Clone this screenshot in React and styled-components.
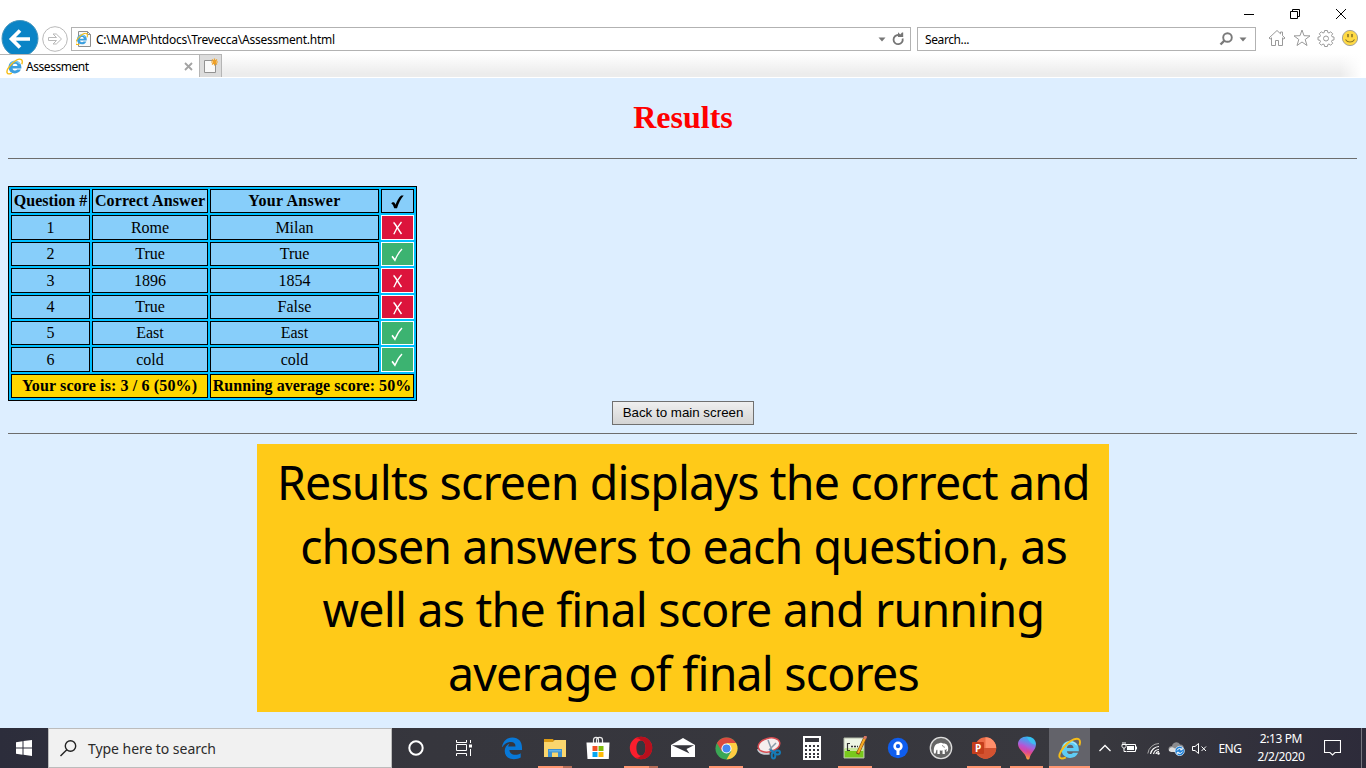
import React from "react";
import styled, { createGlobalStyle } from "styled-components";

const Global = createGlobalStyle`
  * { box-sizing: border-box; }
  html, body { margin: 0; padding: 0; }
  body { width: 1366px; height: 768px; overflow: hidden; background: #ddeeff; }
  svg { display: block; flex: none; }
`;

const ui = `"Noto Sans", "Open Sans", sans-serif`;
const serif = `"Liberation Serif", "Times New Roman", serif`;

const Screen = styled.div`
  width: 1366px;
  height: 768px;
  display: flex;
  flex-direction: column;
  overflow: hidden;
`;

/* ---------- browser window frame ---------- */

const Chrome = styled.header`
  height: 78px;
  flex: none;
  background: #fff;
  font: 12px/16px ${ui};
  color: #000;
`;

const TitleBar = styled.div`
  height: 27px;
  display: flex;
  justify-content: flex-end;
  gap: 36px;
  padding: 9px 20px 0 0;
`;

const NavRow = styled.div`
  height: 27px;
  display: flex;
  align-items: flex-start;
`;

const BackButton = styled.div`
  width: 41px;
  height: 34px;
  margin-top: -7px;
`;

const ForwardButton = styled.div`
  width: 30px;
  margin-top: -1px;
`;

const Field = styled.div`
  width: ${(p) => p.$width}px;
  height: 24px;
  margin-right: ${(p) => p.$after}px;
  border: 1px solid #b2b2b2;
  display: flex;
  align-items: center;
  padding: 0 ${(p) => p.$right}px 0 ${(p) => p.$left}px;
`;

const Label = styled.span`
  flex: ${(p) => (p.$grow ? 1 : "none")};
  margin-left: ${(p) => p.$indent || 0}px;
  padding-top: ${(p) => p.$drop || 0}px;
  letter-spacing: ${(p) => p.$spacing || 0}px;
  white-space: nowrap;
`;

const Tools = styled.div`
  display: flex;
  padding-top: 1px;
`;

const TabRow = styled.div`
  height: 23px;
  display: flex;
  background: linear-gradient(90deg, transparent 1340px, #fff 1362px),
    linear-gradient(#fff, #ececec 85%);
`;

const Tab = styled.div`
  width: 199px;
  height: 23px;
  display: flex;
  align-items: center;
  padding: 1px 6px 0 6px;
  background: #fff;
  border-top: 1px solid #b5b5b5;
`;

const NewTab = styled.div`
  width: 23px;
  height: 23px;
  background: #dcdcdc;
  border: 1px solid #b5b5b5;
  border-bottom: 0;
  padding: 3px 0 0 4px;
`;

/* ---------- page ---------- */

const Page = styled.main`
  height: 650px;
  flex: none;
  padding: 21px 8px 0;
  font-family: ${serif};
  color: #000;
`;

const Title = styled.h1`
  margin: 0;
  height: 36px;
  font-size: 32px;
  line-height: 36px;
  text-align: center;
  color: #f00;
`;

const Rule = styled.div`
  height: 1px;
  width: 1349px;
  background: #6d6d6d;
  margin-top: ${(p) => p.$top}px;
`;

const Table = styled.table`
  width: 409px;
  height: 215px;
  margin-top: 27px;
  table-layout: fixed;
  border-collapse: separate;
  border-spacing: 2px;
  border: 1px solid #000;
  background: #00bfff;
`;

const Col = styled.col`
  width: ${(p) => p.$w}px;
`;

const Row = styled.tr`
  height: ${(p) => p.$h}px;
`;

const Cell = styled.td`
  padding: ${(p) => (p.$low ? 1 : 0)}px ${(p) => (p.$low ? 1 : 0)}px 0 0;
  height: ${(p) => p.$h}px;
  border: 1px solid ${(p) => p.$edge || "#000"};
  background: ${(p) => p.$fill || "#87cefa"};
  text-align: center;
  vertical-align: middle;
  font-size: 16px;
  line-height: 20px;
  font-weight: ${(p) => (p.$bold ? 700 : 400)};
  letter-spacing: ${(p) => p.$spacing || 0}px;
  white-space: nowrap;
  overflow: hidden;

  svg { margin: 0 auto; }
`;

const ButtonRow = styled.div`
  display: flex;
  justify-content: center;
`;

const Button = styled.button`
  width: 142px;
  height: 24px;
  padding: 0;
  border: 1px solid #707070;
  border-radius: 0;
  background: linear-gradient(#efefef, #d4d4d4);
  font: 13.33px/20px "Liberation Sans", Arial, sans-serif;
  color: #000;
  white-space: nowrap;
`;

const Callout = styled.section`
  width: 852px;
  height: 268px;
  margin: 10px 0 0 249px;
  padding-top: 7px;
  background: #ffca18;
  display: flex;
  flex-direction: column;
  align-items: center;
`;

const CalloutLine = styled.div`
  height: 63.7px;
  font: 46.5px/63.7px ${ui};
  letter-spacing: ${(p) => p.$spacing}px;
  margin-right: ${(p) => p.$spacing}px;
  white-space: nowrap;
`;

/* ---------- taskbar ---------- */

const Taskbar = styled.footer`
  height: 40px;
  flex: none;
  display: flex;
  background: linear-gradient(90deg, #2c2d3b 0, #36363d 420px, #38383e 1100px, #2d2b3a 1366px);
  color: #fff;
  font-family: ${ui};
`;

const Slot = styled.div`
  width: ${(p) => p.$w}px;
  height: 40px;
  display: flex;
  align-items: center;
  justify-content: center;
`;

const SearchBox = styled.div`
  width: 344px;
  height: 40px;
  display: flex;
  align-items: center;
  gap: 11px;
  padding-left: 11px;
  background: #f1f1f1;
  border: 1px solid #bcbcbc;
  color: #2b2b2b;
  font-size: 14px;
  letter-spacing: -0.05px;
`;

const Apps = styled.div`
  width: 600.6px;
  margin-left: 2.6px;
  display: flex;
`;

const TaskButton = styled.div`
  flex: 1;
  height: 40px;
  display: flex;
  flex-direction: column;
  align-items: center;
  background: ${(p) => (p.$active ? "linear-gradient(90deg, transparent 1px, #63636a 1px, #63636a 42px, transparent 42px)" : "none")};
`;

const AppIcon = styled.div`
  height: 38px;
  padding-top: 2px;
  display: flex;
  align-items: center;
`;

const Mark = styled.div`
  width: ${(p) => p.$w}px;
  height: 2px;
  background: #ff9671;
  border-right: ${(p) => (p.$multi ? "9px solid #b56c57" : "0")};
`;

const Tray = styled.div`
  flex: 1;
  display: flex;
  align-items: center;
  padding-left: 7px;
`;

const TrayItem = styled.div`
  width: ${(p) => p.$w}px;
  display: flex;
  justify-content: center;
`;

const Lang = styled.div`
  width: 30px;
  margin-left: 7px;
  font-size: 12px;
  letter-spacing: -0.45px;
  text-align: center;
`;

const Clock = styled.div`
  width: 60px;
  margin-left: 6px;
  font-size: 12px;
  line-height: 18px;
  letter-spacing: -0.4px;
  text-align: center;
  white-space: nowrap;
`;

const ShowDesktop = styled.div`
  width: 5px;
  height: 40px;
  margin-left: 6px;
  border-left: 1px solid #77767f;
`;

/* ---------- icons ---------- */

const IE = ({ size = 16, dark }) => (
  <svg width={size} height={size} viewBox="0 0 24 24" fill="none">
    <path d="M21 16.400c-1.600 3.600-4.500 5.400-8.300 5.400-5.400 0-9-3.500-9-8.800s3.700-9.100 9-9.100c5.500 0 9 3.800 9 9.200v1.700H9.300c.2 1.900 1.500 3 3.500 3 1.300 0 2.300-.5 2.900-1.400z" fill={dark ? "#5fcdf5" : "#3b9fdf"} />
    <path d="M9.300 11.400h6.900c-.2-2-1.400-3.200-3.400-3.200s-3.200 1.200-3.500 3.200z" fill={dark ? "#63636a" : "#fff"} />
    <path d="M6 9.500C7.500 6.400 9.800 5 12.800 5c2.900 0 5.200 1.300 6.600 3.600" stroke="#a5e6fb" strokeWidth="1.300" />
    <path d="M22.300 8.700c1-3 1-5.300-.6-6.400C19.400.7 14 2.800 9.200 7.300 4 12.200.6 18.200 1.600 20.900c.7 2.100 3.500 1.900 6.600.3" stroke="#f6bd18" strokeWidth="2" />
  </svg>
);

const Home = () => (
  <svg width="18" height="20" viewBox="0 0 18 20" fill="none" stroke="#999" strokeWidth="1">
    <path d="M1 10 9 2.500l3.500 3.300V4h2v3.700L17 10l-1.200 1-1.300-1.200v7.700h-4v-5h-3v5h-4V9.800L2.200 11z" />
  </svg>
);
const Star = () => (
  <svg width="18" height="20" viewBox="0 0 18 20" fill="none" stroke="#999" strokeWidth="1">
    <path d="m9 2 2 5.700 6 .2-4.800 3.600L14 17.500 9 14l-5 3.500 1.800-6L1 7.900l6-.2z" />
  </svg>
);
const Gear = () => (
  <svg width="18" height="20" viewBox="0 0 18 20" fill="none" stroke="#999" strokeWidth="1">
    <path d="M7.600 2.500h2.800l.4 2 1.200.5 1.700-1.200 2 2L14.500 7.500l.5 1.200 2 .4v2.800l-2 .4-.5 1.200 1.200 1.700-2 2L12 16l-1.200.5-.4 2H7.600l-.4-2L6 16l-1.700 1.200-2-2 1.200-1.700-.5-1.200-2-.4V9.100l2-.4.5-1.200-1.200-1.700 2-2L6 5l1.200-.5z" />
    <circle cx="9" cy="10.500" r="2.500" />
  </svg>
);
const Smile = () => (
  <svg width="18" height="20" viewBox="0 0 18 20" fill="none">
    <circle cx="9" cy="10" r="7.600" fill="#ffda45" stroke="#a6a397" />
    <path d="M7 6v3.300M11 6v3.300" stroke="#8a7526" strokeWidth="1.600" />
    <path d="M4.500 11.500c1.800 3.300 7.200 3.300 9 0" stroke="#8a7526" strokeWidth="1.100" />
  </svg>
);
const Down = () => (
  <svg width="8" height="5" viewBox="0 0 8 5"><path d="M.5.5h7L4 4.500z" fill="#777" /></svg>
);

const Check = ({ bold }) =>
  bold ? (
    <svg width="13" height="14" viewBox="0 0 13 14">
      <path d="M.3 8.500c.8-1.500 3-1.700 3.700 0l.5 1.300C6.100 5.600 8 2.400 10.200.6h2.500C9.600 4.300 7.700 8.300 6 13.200H3.200C2.500 11 1.800 9.300.3 8.500z" fill="#000" />
    </svg>
  ) : (
    <svg width="12" height="14" viewBox="0 0 12 14" fill="none" stroke="#fff">
      <path d="M1 8.500 3.900 12.500C5.700 8 7.800 4.200 11 1" strokeWidth="1.300" />
      <path d="m1.200 8.200 2.600 3.300" strokeWidth="1.200" />
    </svg>
  );
const Cross = () => (
  <svg width="11" height="14" viewBox="0 0 11 14" fill="none" stroke="#fff">
    <path d="M1.500 1.500C3 2 6.500 9 9.500 13" strokeWidth="1.500" />
    <path d="M9.500 1C7 4 3.500 9 1.800 13.300" strokeWidth="1.300" />
  </svg>
);

const Edge = () => (
  <svg width="22" height="24" viewBox="0 0 22 24">
    <path d="M1 10.700C2.200 4.300 6 1.200 11.500 1.200c6 0 9.500 4.300 9.500 10v2.500H8.400c.2 3 2.500 4.800 5.900 4.800 2 0 3.800-.5 5.400-1.500v4.300c-1.900 1.100-4.300 1.600-6.800 1.600-5.600 0-9.200-3.300-9.200-8.200 0-3.300 1.800-6 4.900-7.500-.8.900-1.300 1.900-1.400 3h7.300c0-3-1.500-4.500-4.500-4.500-3.500 0-6.600 1.900-8.600 5z" fill="#0878d7" transform="translate(0 .3)" />
  </svg>
);
const Folder = () => (
  <svg width="22" height="20" viewBox="0 0 22 20">
    <path d="M0 1h9l1.200 2H22v16H0z" fill="#dc9b13" />
    <path d="M0 4h9l1.500-2H22v17H0z" fill="#fad66d" />
    <path d="M4 19v-8h14v8h-4v-4.500H8V19z" fill="#3d91d2" />
    <path d="M5 12h12v1.500H5z" fill="#63b4ea" />
  </svg>
);
const Store = () => (
  <svg width="24" height="24" viewBox="0 0 24 24">
    <path d="M7.500 7V4c0-3.500 5-3.500 5 0v3M10.500 7V4c0-3.500 6-3.500 6 0v3" fill="none" stroke="#e8e8e8" strokeWidth="1.200" />
    <path d="M.5 6.500h23L22.800 23H1.500z" fill="#fff" />
    <path d="M6.500 10h5v5h-5z" fill="#f05125" /><path d="M12.500 10h5v5h-5z" fill="#7ebb0a" />
    <path d="M6.500 16h5v5h-5z" fill="#05a6f0" /><path d="M12.500 16h5v5h-5z" fill="#ffba08" />
  </svg>
);
const Opera = () => (
  <svg width="24" height="24" viewBox="0 0 24 24">
    <path fillRule="evenodd" d="M12 .8a11.200 11.200 0 1 0 0 22.400A11.200 11.200 0 0 0 12 .8zm0 3.600c3 0 4.600 3.200 4.600 7.600s-1.600 7.600-4.600 7.600S7.400 16.400 7.400 12 9 4.400 12 4.400z" fill="#fa1e2d" />
    <path d="M12 .8a11.200 11.200 0 0 1 0 22.400c-2 0-4-.8-5-2 1.500.8 3 .7 5-1.600 3 0 4.600-3.200 4.600-7.600S15 4.400 12 4.400c-1.700-2-3.500-2.200-5-1.600 1.300-1.200 3-2 5-2z" fill="#b8101d" />
  </svg>
);
const Mail = () => (
  <svg width="24" height="20" viewBox="0 0 24 20">
    <path d="M0 7 12 0l12 7v12H0z" fill="#fff" />
    <path d="M1 7.200h22L15.500 11l3 4.500z" fill="#36363d" />
  </svg>
);
const ChromeLogo = () => (
  <svg width="23" height="23" viewBox="0 0 24 24">
    <circle cx="12" cy="12" r="11.500" fill="#3ba755" />
    <path d="M2 6.300A11.500 11.500 0 0 1 22 6.300H12l-5 8.600z" fill="#db4a3f" />
    <path d="M22 6.300A11.500 11.500 0 0 1 12 23.500l5-8.600-5-8.600z" fill="#ffcd42" />
    <circle cx="12" cy="12" r="5.300" fill="#fff" /><circle cx="12" cy="12" r="4.200" fill="#4688f1" />
  </svg>
);
const Snip = () => (
  <svg width="24" height="24" viewBox="0 0 24 24" fill="none">
    <path d="M1.500 13c1 4 6 5 11 4" stroke="#c9cdd3" strokeWidth="3" />
    <ellipse cx="12" cy="9" rx="11" ry="6.800" fill="#f5eeee" stroke="#d74c51" strokeWidth="1.500" transform="rotate(-14 12 9)" />
    <path d="m11 4 4.500 12M19 7l-7 7" stroke="#8a9ba9" strokeWidth="1.500" />
    <ellipse cx="16.500" cy="19.500" rx="1.800" ry="3" stroke="#167bb6" strokeWidth="2" />
    <ellipse cx="20.500" cy="16.500" rx="2.500" ry="2" stroke="#167bb6" strokeWidth="2" />
    <path d="m13 14 4 2" stroke="#167bb6" strokeWidth="2" />
  </svg>
);
const Calc = () => (
  <svg width="18" height="24" viewBox="0 0 18 24">
    <path d="M0 0h18v24H0z" fill="#fff" />
    <path d="M2 2h14v4H2z" fill="#37373e" />
    {[9, 13, 17, 20].map((y) => [2, 6, 10, 14].map((x) => <path key={x + "-" + y} d={`M${x} ${y}h2v2h-2z`} fill="#37373e" />))}
  </svg>
);
const Notepad = () => (
  <svg width="24" height="24" viewBox="0 0 24 24">
    <path d="M1 2h20v20H1z" fill="#eef5e4" stroke="#b3bba8" />
    <path d="M1.500 13h19v8.500h-19z" fill="#78c91c" />
    <path d="M1.500 12h19v3h-19z" fill="#cbe99f" />
    <path d="M4.500 7v8M4.500 7.500H7M4.500 14.500H7" stroke="#333" strokeWidth="1.200" fill="none" />
    <path d="M8 10.500h7" stroke="#333" strokeWidth="1.600" strokeDasharray="2 1" />
    <path d="m14.500 18 7.500-16" stroke="#7b4513" strokeWidth="3.400" /><path d="m15 17 6.500-14" stroke="#f6aa22" strokeWidth="2.200" />
    <path d="m21.500 3 1.300-3" stroke="#d77764" strokeWidth="3" />
  </svg>
);
const SourceTree = () => (
  <svg width="22" height="22" viewBox="0 0 22 22">
    <circle cx="11" cy="11" r="10.200" fill="#0f5eee" />
    <circle cx="11" cy="9.200" r="3.400" fill="none" stroke="#fff" strokeWidth="2.600" /><path d="M9.500 13h3v5h-3z" fill="#fff" />
  </svg>
);
const Mamp = () => (
  <svg width="24" height="24" viewBox="0 0 24 24">
    <circle cx="12" cy="12" r="10.700" fill="#666" stroke="#ddd" strokeWidth="1.300" />
    <path d="M5 17.500c-.8-5 .4-9.500 4.500-10 1.800-1 3.500-.8 4.500 0 3.500-.4 5.200 2 5.200 5 0 2-.5 3.300-1.700 3.300l-.4-1.100c.8-.1.900-1 .5-1.700-.6 1-1.300 1-1.900.5l.2 4.500h-2.400v-3.700c-1 .5-1.800.5-2.700 0v3.700H8.400v-4c-.6-.6-1-.2-1.200.9l-.6 2.600z" fill="#fff" />
    <path d="M13.500 9c.2 1.600 1.200 2.300 2.500 2.200" stroke="#777" fill="none" strokeWidth=".8" />
  </svg>
);
const Letter = styled.text`
  font: 700 10px "Open Sans", sans-serif;
`;
const PowerPoint = () => (
  <svg width="26" height="24" viewBox="0 0 26 24">
    <circle cx="14.500" cy="12" r="10.700" fill="#ed6c47" />
    <path d="M14.500 1.300A10.700 10.700 0 0 1 25.200 12H14.500z" fill="#ff8f6b" />
    <path d="M3.800 12h21.400a10.700 10.700 0 0 1-21.400 0z" fill="#d35230" />
    <rect x="1" y="6" width="12" height="12" rx="1" fill="#c43e1c" />
    <Letter x="4" y="15.600" fill="#fff">P</Letter>
  </svg>
);
const Paint3D = () => (
  <svg width="20" height="24" viewBox="0 0 20 24">
    <defs>
      <linearGradient id="pin" x1="0.700" y1="0" x2="0.400" y2="1">
        <stop offset="0" stopColor="#22bdf0" /><stop offset="0.250" stopColor="#5f8fea" /><stop offset="0.450" stopColor="#a860dc" />
        <stop offset="0.650" stopColor="#e0458f" /><stop offset="0.820" stopColor="#f2705d" /><stop offset="1" stopColor="#fdbb30" />
      </linearGradient>
    </defs>
    <path d="M10 .5c5 0 9 3 9 7.500 0 6-5 8-6.500 14.500-.3 1.300-2.600 1.300-3 0C8 16 1 14 1 8 1 3.500 5 .5 10 .5z" fill="url(#pin)" />
    <path d="M2 10c2-2 5-2 7 1l1 8C7 15.500 3 13.500 2 10z" fill="#c24bd0" opacity=".45" />
    <path d="M10 1c5 0 8.500 3 8.500 7.500C15 8.500 12 6 10 1z" fill="#36cdf2" opacity=".7" />
  </svg>
);

const apps = [
  { icon: <Edge /> },
  { icon: <Folder />, mark: 34, multi: true },
  { icon: <Store /> },
  { icon: <Opera />, mark: 34, multi: true },
  { icon: <Mail /> },
  { icon: <ChromeLogo />, mark: 34 },
  { icon: <Snip /> },
  { icon: <Calc /> },
  { icon: <Notepad />, mark: 34 },
  { icon: <SourceTree /> },
  { icon: <Mamp /> },
  { icon: <PowerPoint />, mark: 34 },
  { icon: <Paint3D />, mark: 33 },
  { icon: <IE size={23} dark />, mark: 41, active: true },
];

const rows = [
  { h: 25, correct: "Rome", given: "Milan", ok: false },
  { h: 24, correct: "True", given: "True", ok: true },
  { h: 25, correct: "1896", given: "1854", ok: false },
  { h: 24, correct: "True", given: "False", ok: false },
  { h: 24, correct: "East", given: "East", ok: true },
  { h: 25, correct: "cold", given: "cold", ok: true },
];

const calloutLines = [
  { text: "Results screen displays the correct and", spacing: -0.84 },
  { text: "chosen answers to each question, as", spacing: -0.92 },
  { text: "well as the final score and running", spacing: -0.8 },
  { text: "average of final scores", spacing: -0.82 },
];

export default function App() {
  return (
    <Screen>
      <Global />
      <Chrome>
        <TitleBar>
          <svg width="10" height="10" viewBox="0 0 10 10"><path d="M0 5.500h10" stroke="#000" /></svg>
          <svg width="10" height="10" viewBox="0 0 10 10" fill="none" stroke="#000"><path d="M.5 2.500h7v7h-7zM2.500 2.500v-2h7v7h-2" /></svg>
          <svg width="10" height="10" viewBox="0 0 10 10" stroke="#000"><path d="m0 0 10 10M10 0 0 10" /></svg>
        </TitleBar>
        <NavRow>
          <BackButton>
            <svg width="41" height="34" viewBox="0 0 41 34" fill="none">
              <circle cx="20" cy="18.500" r="18" fill="#0a84c6" stroke="#4796bd" />
              <path d="M30 19H12M20 10.500 11.500 19l8.500 8.500" stroke="#fff" strokeWidth="3.700" />
            </svg>
          </BackButton>
          <ForwardButton>
            <svg width="28" height="27" viewBox="0 0 28 27" fill="none" stroke="#b9b9b9">
              <circle cx="14" cy="13" r="12.300" />
              <path d="M7.500 11.500h8L12 8h3.300l5.200 5-5.200 5H12l3.500-3.500h-8z" />
            </svg>
          </ForwardButton>
          <Field $width={840} $after={6} $left={4} $right={4}>
            <svg width="16" height="16" viewBox="0 0 16 16">
              <path d="M2.500.5h9l3 3v12h-12z" fill="#fafafa" stroke="#8e8e8e" /><path d="M11.500.5v3h3" fill="none" stroke="#8e8e8e" />
              <svg x="-1" y="1.500" width="13" height="13"><IE size={13} /></svg>
            </svg>
            <Label $grow $spacing={-0.235} $indent={4} $drop={1}>C:\MAMP\htdocs\Trevecca\Assessment.html</Label>
            <Down />
            <svg width="20" height="14" viewBox="0 0 20 14" fill="none">
              <path d="M16.600 6.500A4.600 4.600 0 1 1 12.500 3" stroke="#757575" strokeWidth="1.800" />
              <path d="M12 .2 17 5h-5z" fill="#757575" /><path d="M16 .5h1.200V5H12z" fill="#757575" />
            </svg>
          </Field>
          <Field $width={339} $after={12} $left={7} $right={8}>
            <Label $grow $spacing={-0.4} $drop={1}>Search...</Label>
            <svg width="20" height="14" viewBox="0 0 20 14" fill="none" stroke="#7a7a7a">
              <circle cx="8.500" cy="5.500" r="4.300" strokeWidth="1.900" /><path d="M5.500 8.500 1.500 12.500" strokeWidth="2.400" />
            </svg>
            <Down />
          </Field>
          <Tools>
            <TrayItem $w={18}><Home /></TrayItem>
            <TrayItem $w={31}><Star /></TrayItem>
            <TrayItem $w={18}><Gear /></TrayItem>
            <TrayItem $w={30}><Smile /></TrayItem>
          </Tools>
        </NavRow>
        <TabRow>
          <Tab>
            <IE size={17} />
            <Label $grow $spacing={-0.45} $indent={3}>Assessment</Label>
            <svg width="9" height="9" viewBox="0 0 9 9" stroke="#a3a3a3" strokeWidth="1.800"><path d="m1 1 7 7M8 1 1 8" /></svg>
          </Tab>
          <NewTab>
            <svg width="16" height="16" viewBox="0 0 16 16" fill="none">
              <path d="M.5 2.500h11v12H.5z" fill="#f9f9f9" stroke="#929292" />
              <path d="M10.500.5v7M7 4h7M8 1.500l5 5M13 1.500l-5 5" stroke="#efa127" strokeWidth="1.200" />
            </svg>
          </NewTab>
        </TabRow>
      </Chrome>

      <Page>
        <Title>Results</Title>
        <Rule $top={23} />
        <Table>
          <colgroup>
            <Col $w={79} /><Col $w={116} /><Col $w={169} /><Col $w={33} />
          </colgroup>
          <tbody>
            <Row $h={24}>
              <Cell as="th" $h={24} $bold>Question #</Cell>
              <Cell as="th" $h={24} $bold $spacing={0.12}>Correct Answer</Cell>
              <Cell as="th" $h={24} $bold $spacing={0.3}>Your Answer</Cell>
              <Cell as="th" $h={24} $bold $low><Check bold /></Cell>
            </Row>
            {rows.map((r, i) => (
              <Row key={i} $h={r.h}>
                <Cell $h={r.h}>{i + 1}</Cell>
                <Cell $h={r.h}>{r.correct}</Cell>
                <Cell $h={r.h}>{r.given}</Cell>
                <Cell $h={r.h} $low $edge="#fff" $fill={r.ok ? "#3cb371" : "#dc143c"}>{r.ok ? <Check /> : <Cross />}</Cell>
              </Row>
            ))}
            <Row $h={24}>
              <Cell colSpan={2} $h={24} $bold $fill="#ffd700" $spacing={0.13}>Your score is: 3 / 6 (50%)</Cell>
              <Cell colSpan={2} $h={24} $bold $fill="#ffd700" $spacing={0.04}>Running average score: 50%</Cell>
            </Row>
          </tbody>
        </Table>
        <ButtonRow><Button>Back to main screen</Button></ButtonRow>
        <Rule $top={8} />
        <Callout>
          {calloutLines.map((l) => <CalloutLine key={l.text} $spacing={l.spacing}>{l.text}</CalloutLine>)}
        </Callout>
      </Page>

      <Taskbar>
        <Slot $w={48}>
          <svg width="16" height="16" viewBox="0 0 16 16" fill="#fff"><path d="M0 2.200 6.500 1.300v6.200H0zM7.500 1.100 16 0v7.500H7.500zM0 8.500h6.500v6.200L0 13.800zM7.500 8.500H16V16l-8.500-1.200z" /></svg>
        </Slot>
        <SearchBox>
          <svg width="17" height="17" viewBox="0 0 17 17" fill="none" stroke="#222" strokeWidth="1.400"><circle cx="10.500" cy="6" r="5.200" /><path d="M6.800 9.700.5 16" /></svg>
          <span>Type here to search</span>
        </SearchBox>
        <Slot $w={48}><svg width="16" height="16" viewBox="0 0 16 16"><circle cx="8" cy="8" r="6.700" fill="none" stroke="#fff" strokeWidth="2" /></svg></Slot>
        <Slot $w={48}>
          <svg width="16" height="16" viewBox="0 0 16 16" fill="none" stroke="#fff">
            <path d="M.5 0v2.500h10V0M.5 4.500h10v6H.5zM.5 16v-2.500h10V16M14.500 0v3M14.500 9v7" /><path d="M13 4.500h3v3h-3z" fill="#fff" stroke="none" />
          </svg>
        </Slot>
        <Apps>
          {apps.map((a, i) => (
            <TaskButton key={i} $active={a.active}>
              <AppIcon>{a.icon}</AppIcon>
              {a.mark && <Mark $w={a.mark} $multi={a.multi} />}
            </TaskButton>
          ))}
        </Apps>
        <Tray>
          <TrayItem $w={14}><svg width="12" height="8" viewBox="0 0 12 8" fill="none" stroke="#fff" strokeWidth="1.300"><path d="m.5 7 5.500-5.500L11.500 7" /></svg></TrayItem>
          <TrayItem $w={34}>
            <svg width="16" height="12" viewBox="0 0 16 12" fill="none" stroke="#fff">
              <path d="M4.500 2.500h10v7h-9M15.500 4.500v3M1 2.500h4v2c0 1-1 1.500-2 1.500S1 5.500 1 4.500zM2 0v2.500M4 0v2.500M3 6v3.500h2" /><path d="M6 4h7v4H6z" fill="#fff" stroke="none" />
            </svg>
          </TrayItem>
          <TrayItem $w={16}>
            <svg width="13" height="14" viewBox="0 0 13 14" fill="none">
              <path d="M.8 12.500A11.500 11.500 0 0 1 12 2.500" stroke="#aaa" /><path d="M3.500 13a9 9 0 0 1 8.500-7.500M6.500 13A6 6 0 0 1 12 8.500M9 13a3 3 0 0 1 3-2.500" stroke="#fff" strokeWidth="1.200" /><circle cx="11.500" cy="12.500" r="1.200" fill="#fff" />
            </svg>
          </TrayItem>
          <TrayItem $w={30}>
            <svg width="17" height="15" viewBox="0 0 17 15">
              <path d="M1 10C-.5 7 1.500 5 4 5c1-4 6-5 8-1.500 3 0 4.500 2.500 4 5.500l-5 2z" fill="#8b8b8e" /><path d="M1 10c-.5-3 3-5 5-3l8 4H3z" fill="#ddd" />
              <circle cx="11.700" cy="10" r="4.700" fill="#1c7ed5" stroke="#e6f4ff" strokeWidth=".7" />
              <path d="M9 9.500a3 3 0 0 1 5-1M14.400 10.500a3 3 0 0 1-5 1M14.200 6.500v2.300H12M9.200 13.500v-2.200h2.200" stroke="#fff" fill="none" />
            </svg>
          </TrayItem>
          <TrayItem $w={16}>
            <svg width="15" height="13" viewBox="0 0 15 13" fill="none" stroke="#fff"><path d="M.5 4.500H3l3.500-3v10L3 8.500H.5zM9.500 4.500l4.500 4.500M14 4.500 9.500 9" /></svg>
          </TrayItem>
          <Lang>ENG</Lang>
          <Clock>2:13 PM<br />2/2/2020</Clock>
          <TrayItem $w={44}>
            <svg width="17" height="16" viewBox="0 0 17 16" fill="none" stroke="#fff" strokeWidth="1.100"><path d="M.5.500h16v12H11L8.500 15 6 12.500H.5z" /></svg>
          </TrayItem>
          <ShowDesktop />
        </Tray>
      </Taskbar>
    </Screen>
  );
}
